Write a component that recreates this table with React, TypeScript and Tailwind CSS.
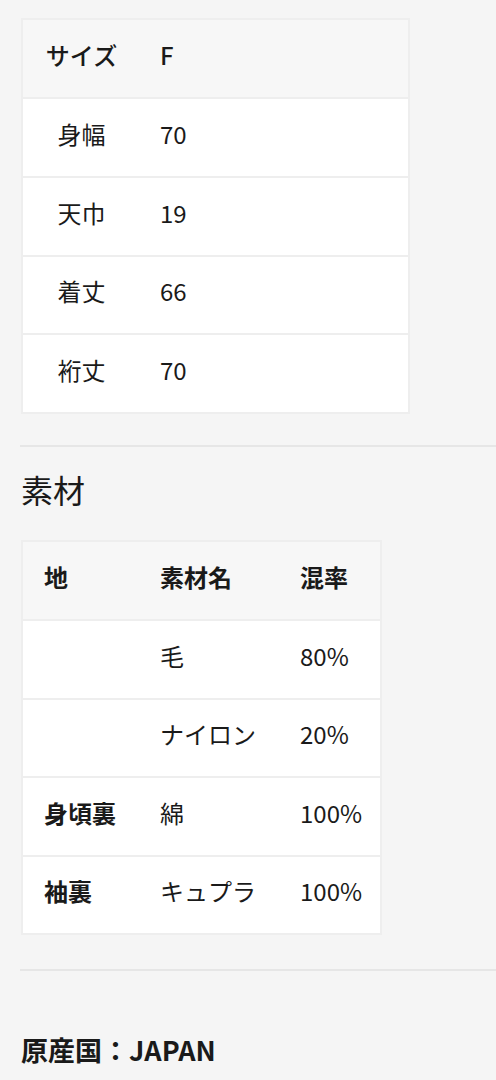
import React from "react";

const font = { fontFamily: '"Noto Sans CJK JP", "Noto Sans", sans-serif' };

function SizeTable() {
  const rows = [
    ["身幅", "70"],
    ["天巾", "19"],
    ["着丈", "66"],
    ["裄丈", "70"],
  ];
  return (
    <div className="ml-[21px] w-[389px] border-2 border-[#eeeeee] bg-white text-[24px] text-[#1a1a1a]">
      <div className="flex h-[77px] items-center bg-[#f7f7f7] pb-[7px]">
        <div className="w-[117px] text-center font-medium">サイズ</div>
        <div className="pl-5 font-medium">F</div>
      </div>
      {rows.map(([k, v]) => (
        <div key={k} className="flex h-[78.75px] items-center border-t-2 border-[#eeeeee] pb-[7px]">
          <div className="w-[117px] text-center">{k}</div>
          <div className="pl-5">{v}</div>
        </div>
      ))}
    </div>
  );
}

function MaterialTable() {
  const rows = [
    ["", "毛", "80%"],
    ["", "ナイロン", "20%"],
    ["身頃裏", "綿", "100%"],
    ["袖裏", "キュプラ", "100%"],
  ];
  return (
    <div className="ml-[21px] w-[361px] border-2 border-[#eeeeee] bg-white text-[24px] text-[#1a1a1a]">
      <div className="flex h-[77px] items-center bg-[#f7f7f7] pb-[7px] font-bold">
        <div className="w-[117px] pl-[21px]">地</div>
        <div className="w-[140px] pl-5">素材名</div>
        <div className="pl-5">混率</div>
      </div>
      {rows.map(([a, b, c], i) => (
        <div key={i} className="flex h-[78.5px] items-center border-t-2 border-[#eeeeee] pb-[7px]">
          <div className="w-[117px] pl-[21px] font-bold">{a}</div>
          <div className="w-[140px] pl-5">{b}</div>
          <div className="pl-5">{c}</div>
        </div>
      ))}
    </div>
  );
}

export default function App() {
  return (
    <div className="min-h-[1080px] w-[496px] bg-[#f5f5f5] pt-[18px]" style={font}>
      <SizeTable />
      <div className="ml-[20px] mt-[31px] h-[2px] bg-[#e6e6e6]" />
      <h2 className="ml-[21px] mt-[22px] text-[32px] leading-[40px] font-normal text-[#1a1a1a]">素材</h2>
      <div className="mt-[31px]">
        <MaterialTable />
      </div>
      <div className="ml-[20px] mt-[34px] h-[2px] bg-[#e6e6e6]" />
      <p className="ml-[21px] mt-[61px] text-[27px] leading-[36px] font-bold text-[#1a1a1a]">原産国：JAPAN</p>
    </div>
  );
}
